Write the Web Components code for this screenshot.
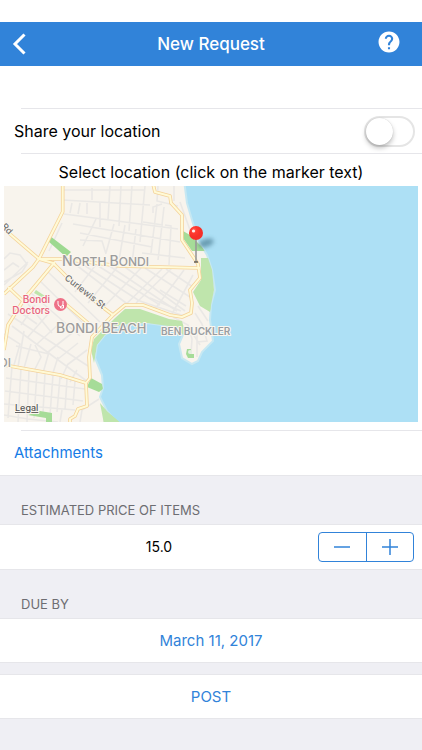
<!DOCTYPE html>
<html lang="en">
<head>
<meta charset="utf-8">
<meta name="viewport" content="width=device-width, initial-scale=1">
<title>New Request</title>
<style>
    body {
        margin: 0;
        min-height: 100vh;
        background: #efeff4;
        color: #000;
        font-family: Inter, "Liberation Sans", sans-serif;
        font-size: 16px;
        --blue: #3183d9;
        --line: #e6e6ea;
    }
</style>
</head>
<body>
<request-page></request-page>

<script>
// Shared helper: every component clones its template into an open shadow root
class BaseElement extends HTMLElement {
    constructor() {
        super();
        const template = document.createElement('template');
        template.innerHTML = this.constructor.markup;
        this.attachShadow({ mode: 'open' }).appendChild(template.content.cloneNode(true));
    }
}

class NavBar extends BaseElement {
    static markup = /*html*/`
        <style>
            :host { display: block; padding-top: 22px; background: #fff; }
            header {
                display: grid;
                grid-template-columns: 44px 1fr 44px;
                align-items: center;
                height: 44px;
                padding-right: 12px;
                padding-left: 12px;
                background: var(--blue);
                color: #fff;
            }
            h1 { margin: 0; font-size: 17px; font-weight: 500; line-height: 22px; text-align: center; }
            button {
                display: flex;
                padding: 0;
                border: 0;
                background: none;
                color: inherit;
                cursor: pointer;
            }
            .help { justify-content: flex-end; padding-right: 10px; padding-bottom: 4px; }
        </style>
        <header>
            <button class="back" aria-label="Back">
                <svg width="14" height="22" viewBox="0 0 14 22"><path d="M12.500 1.500 3 11l9.500 9.500" fill="none" stroke="currentColor" stroke-width="3"/></svg>
            </button>
            <h1><slot></slot></h1>
            <button class="help" aria-label="Help">
                <svg width="22" height="22" viewBox="1.500 1.500 21 21"><path fill="currentColor" d="M12 2C6.480 2 2 6.480 2 12s4.480 10 10 10 10-4.480 10-10S17.520 2 12 2zm1 17h-2v-2h2v2zm2.070-7.750-.900.920C13.450 12.900 13 13.500 13 15h-2v-.500c0-1.100.450-2.100 1.170-2.830l1.240-1.260c.370-.360.590-.860.590-1.410 0-1.100-.900-2-2-2s-2 .900-2 2H8c0-2.210 1.790-4 4-4s4 1.790 4 4c0 .880-.360 1.680-.930 2.250z"/></svg>
            </button>
        </header>
    `;
}

class CellGroup extends BaseElement {
    static markup = /*html*/`
        <style>
            :host { display: block; background: #fff; border-bottom: 1px solid var(--line); }
            :host([ruled]) { border-top: 1px solid var(--line); }
        </style>
        <slot></slot>
    `;
}

class FormCell extends BaseElement {
    static markup = /*html*/`
        <style>
            :host { display: block; }
            .row {
                display: flex;
                align-items: center;
                box-sizing: border-box;
                min-height: 44px;
                padding: 0 7px 0 14px;
            }
            :host([blank]) .row { min-height: 42px; }
            :host([center]) .row { justify-content: center; min-height: 43px; padding: 0 14px; }
            /* the rule starts in line with the section titles */
            :host([divider])::after {
                content: "";
                display: block;
                height: 1px;
                margin-left: 21px;
                background: var(--line);
            }
        </style>
        <div class="row"><slot></slot></div>
    `;
}

class SectionTitle extends BaseElement {
    static markup = /*html*/`
        <style>
            :host { display: flex; align-items: flex-end; height: 48px; }
            h2 { margin: 0; padding: 0 21px 5px; color: #6d6d72; font-size: 13px; font-weight: 400; line-height: 18px; }
        </style>
        <h2><slot></slot></h2>
    `;
}

class LinkButton extends BaseElement {
    static markup = /*html*/`
        <style>
            :host { display: block; }
            button {
                display: block;
                padding: 0;
                border: 0;
                background: none;
                color: var(--link, var(--blue));
                font: 400 15px/20px Inter, "Liberation Sans", sans-serif;
                cursor: pointer;
            }
        </style>
        <button type="button"><slot></slot></button>
    `;
}

class ToggleSwitch extends BaseElement {
    static markup = /*html*/`
        <style>
            :host { display: block; flex: 1; }
            label { display: flex; align-items: center; justify-content: space-between; }
            input {
                appearance: none;
                display: flex;
                box-sizing: border-box;
                width: 51px;
                height: 31px;
                margin: 0;
                border: 2px solid #e5e5e5;
                border-radius: 16px;
                background: #fff;
            }
            input::before {
                content: "";
                width: 27px;
                height: 27px;
                border-radius: 50%;
                background: #fff;
                box-shadow: 0 3px 5px rgb(0 0 0 / 25%), 0 0 1px rgb(0 0 0 / 20%);
            }
            input:checked { justify-content: flex-end; background: #4cd964; }
        </style>
        <label><slot></slot><input type="checkbox" role="switch"></label>
    `;
}

class PriceStepper extends BaseElement {
    static markup = /*html*/`
        <style>
            :host { display: flex; flex: 1; align-items: center; }
            input {
                flex: 1;
                min-width: 0;
                padding: 0 14px 0 0;
                border: 0;
                background: none;
                font: 400 14px/20px Inter, "Liberation Sans", sans-serif;
                text-align: center;
            }
            .buttons {
                display: flex;
                box-sizing: border-box;
                width: 96px;
                height: 30px;
                margin-right: 1px;
                border: 1px solid var(--blue);
                border-radius: 4px;
                color: var(--blue);
            }
            button {
                display: flex;
                flex: 1;
                align-items: center;
                justify-content: center;
                padding: 0;
                border: 0;
                background: none;
                color: inherit;
            }
            button + button { border-left: 1px solid var(--blue); }
            path { stroke: currentColor; stroke-width: 1.500; }
        </style>
        <input type="text" value="15.0" inputmode="decimal" aria-label="Estimated price of items">
        <div class="buttons">
            <button type="button" aria-label="Decrease"><svg width="16" height="16"><path d="M0 8h16"/></svg></button>
            <button type="button" aria-label="Increase"><svg width="16" height="16"><path d="M0 8h16M8 0v16"/></svg></button>
        </div>
    `;

    connectedCallback() {
        const input = this.shadowRoot.querySelector('input');
        const [less, more] = this.shadowRoot.querySelectorAll('button');
        const step = (by) => { input.value = Math.max(0, Number(input.value) + by).toFixed(1); };
        less.addEventListener('click', () => step(-1));
        more.addEventListener('click', () => step(1));
    }
}

class LocationMap extends BaseElement {
    static markup = /*html*/`
        <style>
            :host { display: block; padding: 0 4px 8px; }
            p { margin: 0; padding: 8px 0 4px; line-height: 20px; text-align: center; }
            svg { display: block; width: 100%; height: auto; }
            .minor path { fill: none; stroke: #eae8e5; stroke-width: 1.600; }
            .road { fill: none; stroke-linejoin: round; }
            .edge { stroke: #f4d29a; stroke-width: 3.600; }
            .fill { stroke: #fffad6; stroke-width: 2; }
            .park { fill: #bfe5ac; }
            text { paint-order: stroke; stroke: #faf6ef; stroke-width: 2px; stroke-linejoin: round; }
            .suburb { fill: #9c9c9c; font-size: 12px; font-weight: 500; }
            .suburb .cap { font-size: 14px; }
            .suburb.large { font-size: 13px; }
            .small { fill: #9a9ea2; font-size: 10px; font-weight: 600; }
            .street { fill: #707070; font-size: 9px; font-weight: 500; }
            .poi { fill: #e8627c; font-size: 10px; font-weight: 500; }
            .legal { fill: #555; font-size: 9px; font-weight: 500; text-decoration: underline; }
        </style>
        <p><slot></slot></p>
        <svg viewBox="4 186 414 236" role="img" aria-label="Map of Bondi Beach">
            <defs>
                <path id="roads" d="M62.700 184V211.700L39.300 258.300 33 267 4 294M4 229 39 259 53 263 67 277 97 303 113 315M39 259 62 259 120 266 200 268M55 262 25 298 8 325 4 350M8 287 25 303M62 301 88 323M153 184 155 192 170 196 171 203 182 215V240L198 264 200 278 190 290 192 303 191 313 182 317 170 315 143 305H125L113 315 92 337 89 357 90 378 86 383 87 406 78 409 75 416 70 419V424M4 365 60 375 86 383"/>
                <clipPath id="land"><path d="M4 186H185L187 203 192 220 198 240 207 255 212 270 214 290 211 305 210 320 213 341 202 352 198 361 192 364 182 358 179 344 183 335 176 327 147 323 120 325 105 335 97 345 95 358 102 375 103 388 100 397 107 411 120 422H4Z"/></clipPath>
                <radialGradient id="pin" cx="35%" cy="30%"><stop offset="0" stop-color="#ff6a60"/><stop offset=".4" stop-color="#ff3b30"/><stop offset="1" stop-color="#f52f28"/></radialGradient>
                <filter id="soft" x="-50%" y="-50%" width="200%" height="200%"><feGaussianBlur stdDeviation="2"/></filter>
            </defs>
            <rect x="4" y="186" width="414" height="236" fill="#ade0f5"/>
            <path fill="#f8f4ed" stroke="#c7e8f2" stroke-width="2" d="M0 180H184L187 203 192 220 198 240 207 255 212 270 215 290 211 305 210 320 213 341 202 352 198 361 192 364 182 358 179 344 183 335 176 327 147 323 120 325 105 335 97 345 95 358 102 375 103 388 100 397 107 411 120 426H0Z"/>
            <g clip-path="url(#land)">
                <g class="minor">
                    <!-- north grid -->
                    <path d="M63 190H145M63 200 150 205M64 214 178 229M73 224 180 242M80 233 152 247M92 188V200M110 186 108 219M121 186 119 226M132 186 129 231M145 186 140 242M157 204 151 253M164 207 158 260M100 202V227M72 203 70 213M80 203 78 214M87 203V214M96 219 83 246M114 224 106 253M125 225 119 260M136 229 132 264M158 186 157 201 178 206M174 186V201M165 225 171 226 169 265M153 213V207L162 204M143 222 163 225M80 240 102 241 106 254M142 253 185 258M180 202 190 230"/>
                    <!-- middle diagonals -->
                    <path d="M63 255 130 306M76 260 138 300M92 262 160 305M105 263 177 311M125 267 185 311M145 268 190 297M166 269 193 287M75 292 98 262M88 303 119 265M101 310 141 268M112 318 162 269M136 303 172 268M155 309 184 270M172 314 193 275M62 223 49 251M54 242 65 255M48 272 100 322M40 281 89 329M31 293 80 336"/>
                    <!-- west streets -->
                    <path d="M4 259 10 253 20 255 27 264 22 272 4 282M4 270 13 263 19 267M4 285 28 262M8 314 88 366M12 326 88 382M21 325 35 305M27 338 48 314M37 344 61 322M48 352 72 333M58 359 78 343M67 365 87 350M14 308 37 324M28 304 52 333M4 334 20 344 14 365M24 331 18 367M31 344 24 368M16 346 49 354M35 345 41 357 34 371M49 352 43 373M58 357 52 376M68 364 61 379M77 370 70 382"/>
                    <path d="M6 378 85 389M5 391 83 401M4 404 75 410M12 366 8 418M21 368 18 422M29 370 27 422M37 372 34 418M45 373 43 413M53 375 50 415M60 377 57 412M67 379 65 410M75 381 73 405M4 415 28 419 58 422M62 410 60 422M80 422 82 410 99 399M104 422V409"/>
                    <!-- headland -->
                    <path d="M137 300 184 316M150 298 181 311M160 290 186 306M173 317 188 325 192 339 191 354M195 313 202 324 207 341 197 342M198 306 208 321M197 334V357M188 326 200 345"/>
                </g>
                <g class="park">
                    <path d="M50 236 71 252 66 257 48 241Z" fill="#9dd990"/><path d="M36 290 45 296 43 298 34 293Z"/>
                    <path d="M183 231 190 235 206 251H192L183 238Z" fill="#a6dc98"/>
                    <path d="M201 258H210L217 290 210 312 200 306 193 292 201 280Z"/>
                    <path d="M125 309H140L169 319 182 321 186 335H179L158 326 147 323 120 325 105 335 97 345 94 363 91 350 94 339 115 318Z"/>
                    <path d="M91 378 102 384 103 389 99 392 87 387Z" fill="#a6dc98"/><path d="M100 403 107 411 122 424H104Z"/><path d="M28 415 40 411 52 413V422H46V418Z" fill="#a6dc98"/>
                    <path d="M187 349 191 349 190 354H194V358H188L186 354Z" fill="#a6dc98"/><circle cx="190" cy="352" r="2" fill="#e7efe2"/>
                </g>
                <use href="#roads" class="road edge"/>
                <use href="#roads" class="road fill"/>
            </g>
            <text class="suburb" x="62" y="266"><tspan class="cap">N</tspan>ORTH <tspan class="cap">B</tspan>ONDI</text>
            <text class="suburb large" x="56" y="333"><tspan class="cap">B</tspan>ONDI <tspan class="cap">B</tspan>EACH</text>
            <text class="small" x="161" y="335">BEN BUCKLER</text>
            <text class="suburb" x="-1" y="367">DI</text>
            <text class="street" transform="translate(64 279) rotate(38)">Curlewis St</text>
            <text class="street" transform="translate(1 227) rotate(45)">Rd</text>
            <text class="poi" x="50" y="303" text-anchor="end">Bondi</text>
            <text class="poi" x="50" y="314" text-anchor="end">Doctors</text>
            <circle cx="60.500" cy="304.500" r="6.500" fill="#ee7187"/>
            <path d="M58 301V304A2.500 2.500 0 0 0 63 304V301M60.500 306.500V308H63.500V305" fill="none" stroke="#fff" stroke-width="1"/>
            <text class="legal" x="15" y="411">Legal</text>
            <!-- marker -->
            <ellipse cx="206" cy="243" rx="8" ry="4" transform="rotate(-18 206 243)" fill="#326479" opacity=".55" filter="url(#soft)"/>
            <path d="M196 239V262" stroke="#999" stroke-width="1.600"/>
            <path d="M194 262H198" stroke="#665f56" stroke-width="1.500"/>
            <circle cx="196" cy="233" r="7" fill="url(#pin)"/>
            <circle cx="193.500" cy="231" r="1.600" fill="#fff" opacity=".9"/>
        </svg>
    `;
}

class RequestPage extends BaseElement {
    static markup = /*html*/`
        <style>
            :host { display: block; }
            hr { height: 1px; margin: 0 0 0 21px; border: 0; background: var(--line); }
            .attachments { --link: #167ce6; }
            .post { margin-top: 11px; }
        </style>
        <nav-bar>New Request</nav-bar>
        <main>
            <cell-group>
                <form-cell blank divider></form-cell>
                <form-cell divider><toggle-switch>Share your location</toggle-switch></form-cell>
                <location-map>Select location (click on the marker text)</location-map>
                <hr>
                <form-cell><link-button class="attachments">Attachments</link-button></form-cell>
            </cell-group>
            <section-title>ESTIMATED PRICE OF ITEMS</section-title>
            <cell-group ruled>
                <form-cell><price-stepper></price-stepper></form-cell>
            </cell-group>
            <section-title>DUE BY</section-title>
            <cell-group ruled>
                <form-cell center><link-button>March 11, 2017</link-button></form-cell>
            </cell-group>
            <cell-group ruled class="post">
                <form-cell center><link-button>POST</link-button></form-cell>
            </cell-group>
        </main>
    `;
}

customElements.define('nav-bar', NavBar);
customElements.define('cell-group', CellGroup);
customElements.define('form-cell', FormCell);
customElements.define('section-title', SectionTitle);
customElements.define('link-button', LinkButton);
customElements.define('toggle-switch', ToggleSwitch);
customElements.define('price-stepper', PriceStepper);
customElements.define('location-map', LocationMap);
customElements.define('request-page', RequestPage);
</script>
</body>
</html>
